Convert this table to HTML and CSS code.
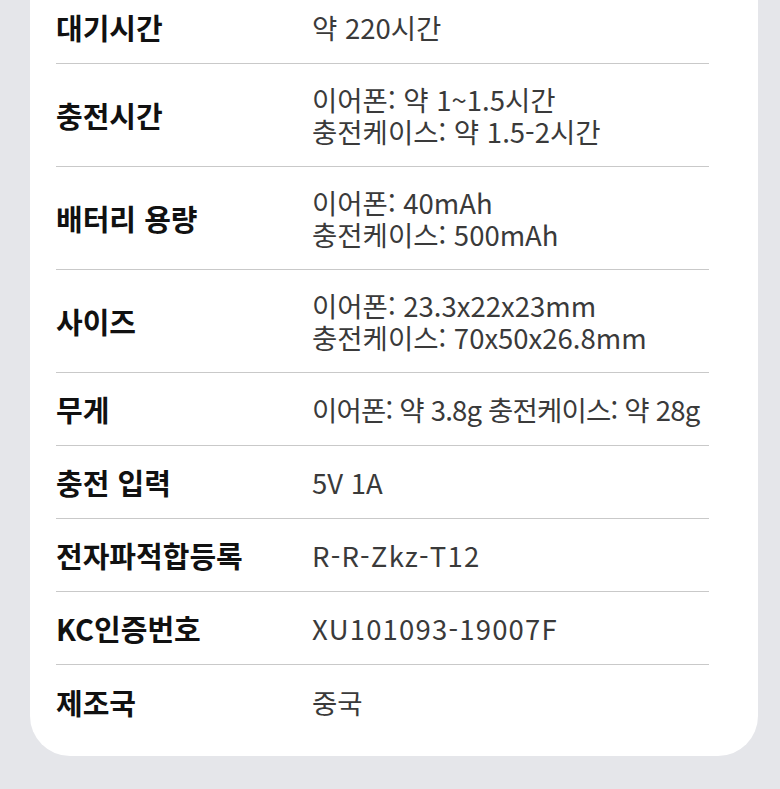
FILE: index.html
```html
<!DOCTYPE html>
<html lang="ko">
<head>
<meta charset="utf-8">
<link rel="stylesheet" href="styles.css">
</head>
<body>
<div class="card">
  <div class="row"><div class="label">대기시간</div><div class="value"><div class="line">약 220시간</div></div></div>
  <div class="row"><div class="label">충전시간</div><div class="value"><div class="line">이어폰: 약 1~1.5시간</div><div class="line">충전케이스: 약 1.5-2시간</div></div></div>
  <div class="row"><div class="label">배터리 용량</div><div class="value"><div class="line">이어폰: 40mAh</div><div class="line">충전케이스: 500mAh</div></div></div>
  <div class="row"><div class="label">사이즈</div><div class="value"><div class="line">이어폰: 23.3x22x23mm</div><div class="line">충전케이스: 70x50x26.8mm</div></div></div>
  <div class="row"><div class="label">무게</div><div class="value value-tight"><div class="line">이어폰: 약 3.8g 충전케이스: 약 28g</div></div></div>
  <div class="row"><div class="label">충전 입력</div><div class="value"><div class="line">5V 1A</div></div></div>
  <div class="row"><div class="label">전자파적합등록</div><div class="value value-wide"><div class="line">R-R-Zkz-T12</div></div></div>
  <div class="row"><div class="label">KC인증번호</div><div class="value value-wide"><div class="line">XU101093-19007F</div></div></div>
  <div class="row last"><div class="label">제조국</div><div class="value"><div class="line">중국</div></div></div>
</div>
</body>
</html>
```

FILE: styles.css
```css
html, body {
  margin: 0;
  padding: 0;
  background: #e5e6ea;
}
body {
  padding: 0 22px 0 30px;
  height: 789px;
  overflow: hidden;
  font-family: "Noto Sans CJK KR", "Noto Sans", sans-serif;
}
.card {
  background: #ffffff;
  margin-top: -9px;
  padding: 0 49px 18px 26px;
  border-radius: 0 0 40px 40px;
}
.row {
  display: flex;
  align-items: center;
  box-sizing: border-box;
  min-height: 73px;
  padding: 19px 0;
  border-bottom: 1px solid #c9c9c9;
}
.row.last {
  border-bottom: none;
}
.label {
  width: 256px;
  flex: none;
  font-size: 29px;
  font-weight: 700;
  color: #111111;
  line-height: 32px;
}
.value {
  font-size: 27.5px;
  line-height: 32px;
  color: #3a3a3a;
  font-weight: 400;
  white-space: nowrap;
}
.line {
  height: 32px;
}
.value-tight {
  letter-spacing: -0.8px;
}
.value-wide {
  letter-spacing: 1.2px;
}
```
